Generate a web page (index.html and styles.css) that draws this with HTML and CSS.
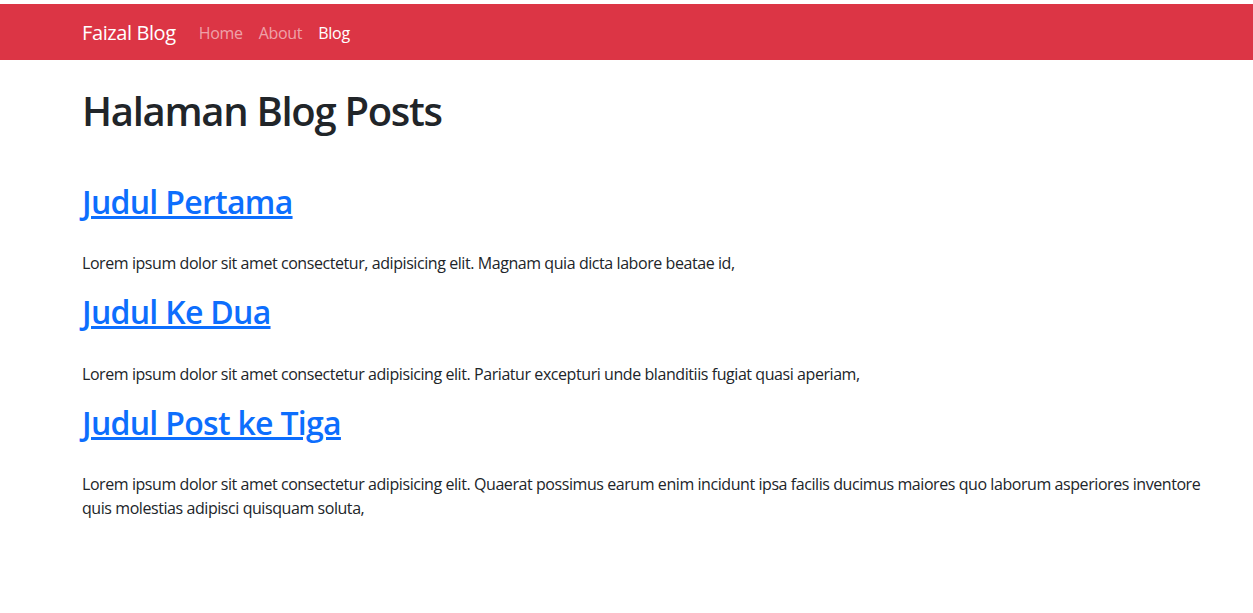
FILE: index.html
```html
<!DOCTYPE html>
<html lang="id">
<head>
<meta charset="utf-8">
<title>Faizal Blog</title>
<link rel="stylesheet" href="styles.css">
</head>
<body>
<nav class="navbar">
  <div class="container nav-inner">
    <a class="brand" href="#">Faizal Blog</a>
    <ul class="nav-links">
      <li><a class="nav-link" href="#">Home</a></li>
      <li><a class="nav-link" href="#">About</a></li>
      <li><a class="nav-link active" href="#">Blog</a></li>
    </ul>
  </div>
</nav>
<main class="container main">
  <h1 class="page-title">Halaman Blog Posts</h1>
  <article class="post">
    <h2 class="post-title"><a href="#">Judul Pertama</a></h2>
    <p class="post-excerpt">Lorem ipsum dolor sit amet consectetur, adipisicing elit. Magnam quia dicta labore beatae id,</p>
  </article>
  <article class="post">
    <h2 class="post-title"><a href="#">Judul Ke Dua</a></h2>
    <p class="post-excerpt">Lorem ipsum dolor sit amet consectetur adipisicing elit. Pariatur excepturi unde blanditiis fugiat quasi aperiam,</p>
  </article>
  <article class="post">
    <h2 class="post-title"><a href="#">Judul Post ke Tiga</a></h2>
    <p class="post-excerpt">Lorem ipsum dolor sit amet consectetur adipisicing elit. Quaerat possimus earum enim incidunt ipsa facilis ducimus maiores quo laborum asperiores inventore quis molestias adipisci quisquam soluta,</p>
  </article>
</main>
</body>
</html>
```

FILE: styles.css
```css
* { box-sizing: border-box; }
html, body { margin: 0; padding: 0; }
body {
  padding-top: 4px;
  font-family: "Open Sans", "Noto Sans", sans-serif;
  font-size: 16px;
  line-height: 1.5;
  color: #212529;
  background: #fff;
}
.container {
  width: 1154px;
  margin-left: 70px;
  padding: 0 12px;
}
.navbar {
  background: #dc3545;
  height: 56px;
}
.nav-inner {
  display: flex;
  align-items: center;
  height: 100%;
  padding-top: 2px;
}
.brand {
  color: #fff;
  text-decoration: none;
  font-size: 20px;
  margin-right: 16px;
  letter-spacing: -0.4px;
}
.nav-links {
  display: flex;
  list-style: none;
  margin: 0 0 0 -1px;
  padding: 0;
}
.nav-link {
  display: block;
  padding: 8px;
  color: rgba(255,255,255,0.55);
  text-decoration: none;
  letter-spacing: -0.3px;
}
.nav-link.active { color: #fff; }
.page-title {
  margin: 27px 0 48px;
  font-size: 40px;
  font-weight: 600;
  line-height: 1.2;
  letter-spacing: -1.3px;
}
.post-title {
  margin: 0 0 30px;
  font-size: 32px;
  font-weight: 600;
  line-height: 1.2;
  letter-spacing: -0.7px;
}
.post-title a {
  color: #0d6efd;
  text-decoration: underline;
}
.post-excerpt {
  margin: 0 0 18px;
  letter-spacing: -0.43px;
}
```
